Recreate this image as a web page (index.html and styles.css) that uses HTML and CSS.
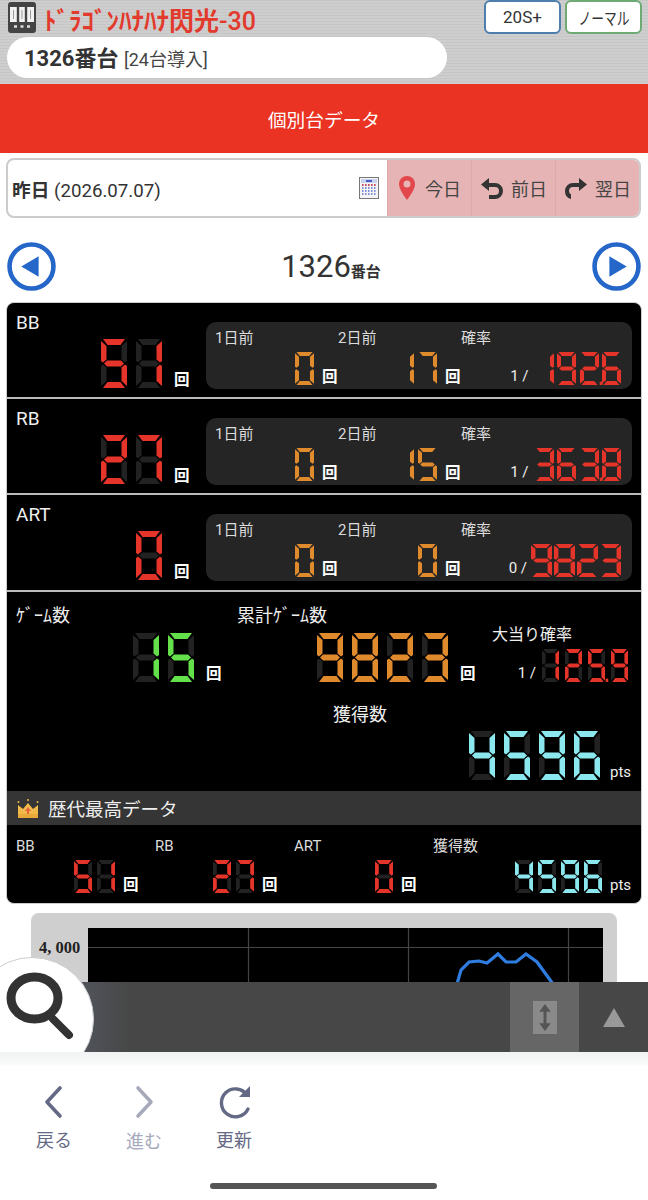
FILE: index.html
```html
<!DOCTYPE html>
<html lang="ja">
<head>
<meta charset="utf-8">
<title>1326番台</title>
<link rel="stylesheet" href="styles.css">
</head>
<body>
<div class="page">
  <header class="head">
    <div class="head-top">
      <svg class="slot-icon" viewBox="0 0 28 31"><rect x="1" y="1" width="26" height="29" rx="2" fill="#f2f2f2" stroke="#444" stroke-width="2"/><rect x="1" y="1" width="26" height="4" fill="#444"/><path d="M10 5v15M18 5v15" stroke="#444" stroke-width="2.400"/><path d="M5.500 8v9M14 8v9M22.500 8v9" stroke="#999" stroke-width="1"/><rect x="1" y="20" width="26" height="10" fill="#444"/><path d="M6 24.500h3M12.500 24.500h3M19 24.500h3" stroke="#ddd" stroke-width="2.500"/></svg>
      <h1 class="title">ﾄﾞﾗｺﾞﾝﾊﾅﾊﾅ閃光<span class="title-num">-30</span></h1>
      <div class="head-btns">
        <span class="hbtn hbtn-blue">20S+</span>
        <span class="hbtn hbtn-green"><span class="narrow">ノーマル</span></span>
      </div>
    </div>
    <div class="pill"><b>1326番台</b> <span class="pill-sub">[24台導入]</span></div>
  </header>
  <div class="redbar">個別台データ</div>
  <div class="datebar">
    <div class="date-left">
      <span class="date-text"><b>昨日</b> (2026.07.07)</span>
      <svg class="cal" viewBox="0 0 20 22"><rect x=".5" y=".5" width="19" height="21" fill="#f4f4f4" stroke="#777"/><rect x="2" y="2" width="16" height="4" fill="#c9d3ee"/><path d="M7 3h6v2H7z" fill="#4a57c8"/><path d="M3 8h14M3 11h14M3 14h14M3 17h14" stroke="#5a6bd0" stroke-width="1.400" stroke-dasharray="1.500 1.500"/><path d="M3 8h14" stroke="#d33" stroke-width="1.400" stroke-dasharray="1.500 1.500"/></svg>
    </div>
    <div class="date-btn">
      <svg class="dicon" viewBox="0 0 18 26"><path d="M9 1a8 8 0 0 0-8 8c0 6 8 16 8 16s8-10 8-16a8 8 0 0 0-8-8z" fill="#e2474c"/><circle cx="9" cy="9" r="3.500" fill="#e9b5b5"/></svg><span>今日</span>
    </div>
    <div class="date-btn">
      <svg class="dicon dicon-arrow" viewBox="0 0 24 24"><path d="M9 2 1 8.500 9 15v-4h6a4 4 0 0 1 4 4 4 4 0 0 1-4 4H9v4h6a8 8 0 0 0 8-8 8 8 0 0 0-8-8H9z" fill="#333"/></svg><span>前日</span>
    </div>
    <div class="date-btn">
      <svg class="dicon dicon-arrow" viewBox="0 0 24 24"><path d="M15 2l8 6.500L15 15v-4H9a4 4 0 0 0-4 4 4 4 0 0 0 2 3.500V23a8 8 0 0 1-6-8 8 8 0 0 1 8-8h6z" fill="#333"/></svg><span>翌日</span>
    </div>
  </div>
  <nav class="numnav">
    <svg class="navarrow" viewBox="0 0 48 48"><circle cx="24" cy="24" r="21.500" fill="#fff" stroke="#2566c9" stroke-width="4.500"/><path d="M14 24 31 14v20z" fill="#2566c9"/></svg>
    <div class="numtitle">1326<small>番台</small></div>
    <svg class="navarrow" viewBox="0 0 48 48"><circle cx="24" cy="24" r="21.500" fill="#fff" stroke="#2566c9" stroke-width="4.500"/><path d="M34 24 17 14v20z" fill="#2566c9"/></svg>
  </nav>
  <section class="panel">
    <div class="row">
      <div class="row-main">
        <div class="row-label">BB</div>
        <div class="val"><span class="led led-l">51</span><span class="unit">回</span></div>
      </div>
      <div class="sub">
        <div class="sub-label">1日前</div><div class="sub-label">2日前</div><div class="sub-label">確率</div>
        <div class="val"><span class="led led-m led-nooff">0</span><span class="unit">回</span></div>
        <div class="val"><span class="led led-m led-nooff">17</span><span class="unit">回</span></div>
        <div class="val rate"><span class="frac">1 /</span><span class="led led-r led-nooff">192.6</span></div>
      </div>
    </div>
    <div class="row">
      <div class="row-main">
        <div class="row-label">RB</div>
        <div class="val"><span class="led led-l">27</span><span class="unit">回</span></div>
      </div>
      <div class="sub">
        <div class="sub-label">1日前</div><div class="sub-label">2日前</div><div class="sub-label">確率</div>
        <div class="val"><span class="led led-m led-nooff">0</span><span class="unit">回</span></div>
        <div class="val"><span class="led led-m led-nooff">15</span><span class="unit">回</span></div>
        <div class="val rate"><span class="frac">1 /</span><span class="led led-r led-nooff">363.8</span></div>
      </div>
    </div>
    <div class="row row-last">
      <div class="row-main">
        <div class="row-label">ART</div>
        <div class="val"><span class="led led-l">0</span><span class="unit">回</span></div>
      </div>
      <div class="sub">
        <div class="sub-label">1日前</div><div class="sub-label">2日前</div><div class="sub-label">確率</div>
        <div class="val"><span class="led led-m led-nooff">0</span><span class="unit">回</span></div>
        <div class="val"><span class="led led-m led-nooff">0</span><span class="unit">回</span></div>
        <div class="val rate"><span class="frac frac-tight">0 /</span><span class="led led-w led-nooff">9823</span></div>
      </div>
    </div>
    <div class="games">
      <div class="game-col game-col-a">
        <div class="game-label">ｹﾞｰﾑ数</div>
        <div class="val"><span class="led led-l led-green">15</span><span class="unit unit-game">回</span></div>
      </div>
      <div class="game-col game-col-b">
        <div class="game-label">累計ｹﾞｰﾑ数</div>
        <div class="val"><span class="led led-l led-orange">9823</span><span class="unit unit-game">回</span></div>
      </div>
      <div class="game-col game-col-c">
        <div class="hit-label">大当り確率</div>
        <div class="val"><span class="frac frac-hit">1 /</span><span class="led led-h">125.9</span></div>
      </div>
    </div>
    <div class="points">
      <div class="game-label">獲得数</div>
      <div class="val"><span class="led led-l led-cyan">4596</span><span class="pts">pts</span></div>
    </div>
    <div class="band">
      <svg class="crown" viewBox="0 0 22 19"><rect x="1" y="15" width="20" height="4" fill="#e8a93a"/><path d="M1 15V6l5 4 5-6 5 6 5-4v9z" fill="#f2b94a"/><path d="M11 8l3 4h-2v3h-2v-3H8z" fill="#e5653c"/><circle cx="1.500" cy="3" r="1" fill="#f2b94a"/><circle cx="11" cy="1" r="1" fill="#f2b94a"/><circle cx="20.500" cy="3" r="1" fill="#f2b94a"/></svg>
      <span>歴代最高データ</span>
    </div>
    <div class="best">
      <div class="best-col"><div class="best-label">BB</div><div class="val"><span class="led led-s">51</span><span class="unit">回</span></div></div>
      <div class="best-col"><div class="best-label">RB</div><div class="val"><span class="led led-s">27</span><span class="unit">回</span></div></div>
      <div class="best-col"><div class="best-label">ART</div><div class="val"><span class="led led-s">0</span><span class="unit">回</span></div></div>
      <div class="best-col best-col-last"><div class="best-label">獲得数</div><div class="val"><span class="led led-s led-cyan">4596</span><span class="pts">pts</span></div></div>
    </div>
  </section>
  <div class="chart">
    <div class="chart-y">4, 000</div>
    <svg class="plot" viewBox="0 0 515 100"><rect width="515" height="100" fill="#000"/><path d="M0 19.500h515M160.500 0v100M320.500 0v100M480.500 0v100" stroke="#444" stroke-width="1.200"/><path d="M369 56 373 42 381 34 391 33 399 35 410 26 418 34 428 34 438 26 449 34 465 56" fill="none" stroke="#2f7de1" stroke-width="3.200"/></svg>
  </div>
</div>

<div class="floatbar">
  <div class="searchcircle">
    <svg class="searchicon" viewBox="0 0 70 70"><ellipse cx="28.500" cy="26" rx="23.500" ry="21" fill="none" stroke="#333" stroke-width="9"/><path d="M47 47 63 63" stroke="#333" stroke-width="8" stroke-linecap="round"/></svg>
  </div>
  <div class="floatbtn floatbtn-active"><span class="resize"><svg viewBox="0 0 24 34"><path d="M12 3 6 11h4.500v12H6l6 8 6-8h-4.500V11H18z" fill="#555"/></svg></span></div>
  <div class="floatbtn"><svg class="tri" viewBox="0 0 22 19"><path d="M11 0 22 19H0z" fill="#999"/></svg></div>
</div>

<div class="toolbar">
  <div class="tool">
    <svg class="tool-icon" viewBox="0 0 28 36"><path d="M20 4 7 18l13 14" fill="none" stroke="#646a85" stroke-width="3.600" stroke-linecap="round" stroke-linejoin="round"/></svg>
    <span>戻る</span>
  </div>
  <div class="tool tool-off">
    <svg class="tool-icon" viewBox="0 0 28 36"><path d="M8 4l13 14L8 32" fill="none" stroke="#a6a9ba" stroke-width="3.600" stroke-linecap="round" stroke-linejoin="round"/></svg>
    <span>進む</span>
  </div>
  <div class="tool">
    <svg class="tool-icon tool-reload" viewBox="0 0 36 36"><path d="M29 25a14 14 0 1 1-1-14" fill="none" stroke="#646a85" stroke-width="3.400" stroke-linecap="round"/><path d="M31 2v11H20z" fill="#646a85"/></svg>
    <span>更新</span>
  </div>
  <div class="homebar"></div>
</div>
<script src="led.js"></script>
</body>
</html>
```
FILE: styles.css
```css
* { box-sizing: border-box; }
html, body { margin: 0; padding: 0; }
body {
  width: 648px;
  height: 1200px;
  overflow: hidden;
  position: relative;
  background: #fff;
  color: #333;
  font-family: Roboto, "Noto Sans CJK JP", sans-serif;
}
.page { display: flex; flex-direction: column; }

/* header */
.head {
  height: 84px;
  padding: 0 6px 0 7px;
  background: repeating-linear-gradient(180deg, #c6c6c6 0, #c6c6c6 1px, #cecece 1px, #cecece 3px);
}
.head-top { display: flex; align-items: flex-start; height: 37px; }
.slot-icon { width: 28px; height: 31px; margin: 2px 8px 0 1px; flex: none; }
.title {
  margin: 0;
  font-size: 25px;
  line-height: 38px;
  font-weight: 700;
  color: #e23a2c;
  white-space: nowrap;
  font-family: "Noto Sans CJK JP", sans-serif;
}
.title-num { font-family: Roboto, sans-serif; font-weight: 500; font-size: 25px; }
.head-btns { margin-left: auto; display: flex; gap: 4px; }
.hbtn {
  width: 77px;
  height: 34px;
  background: #fff;
  border-radius: 6px;
  border: 2px solid;
  font-size: 17px;
  color: #333;
  display: flex;
  align-items: center;
  justify-content: center;
  white-space: nowrap;
}
.hbtn-blue { border-color: #4d7fae; }
.hbtn-green { border-color: #6eaa74; }
.narrow { display: inline-block; transform: scaleX(.75); }
.pill {
  width: 440px;
  height: 41px;
  background: #fff;
  border-radius: 21px;
  padding: 0 17px;
  line-height: 44px;
  font-size: 22px;
  white-space: nowrap;
}
.pill-sub { font-size: 18px; color: #444; }

.redbar {
  height: 69px;
  background: #ea3323;
  color: #fff;
  font-size: 18.700px;
  display: flex;
  align-items: center;
  justify-content: center;
}

/* date bar */
.datebar {
  margin: 5px 7px 0 6px;
  height: 60px;
  display: flex;
  border: 2px solid #ccc;
  border-radius: 8px;
  overflow: hidden;
  background: #fff;
}
.date-left {
  width: 379px;
  display: flex;
  align-items: center;
  justify-content: space-between;
  padding: 0 8px 0 4px;
  font-size: 18.700px;
  color: #333;
}
.cal { width: 20px; height: 22px; }
.date-btn {
  flex: 1;
  background: #e6b4b4;
  border-left: 1px solid #dcaaaa;
  display: flex;
  align-items: center;
  justify-content: center;
  gap: 9px;
  font-size: 18px;
  color: #444;
}
.dicon { width: 18px; height: 26px; }
.dicon-arrow { width: 24px; height: 24px; margin-right: -2px; }

/* number nav */
.numnav {
  height: 84px;
  padding: 12px 7px 0;
  display: flex;
  align-items: center;
  justify-content: space-between;
}
.navarrow { width: 49px; height: 49px; }
.numtitle { font-size: 31px; color: #333; margin-left: 14px; }
.numtitle small { font-size: 15px; font-weight: 700; }

/* data panel */
.panel {
  margin: 0 6px;
  height: 602px;
  background: #000;
  border: 1px solid #ccc;
  border-radius: 8px;
  overflow: hidden;
  color: #eee;
}
.row {
  height: 96px;
  display: flex;
  border-bottom: 2px solid #bbb;
}
.row-last { height: 97px; }
.row-main { width: 199px; padding: 10px 18px 0 9px; display: flex; flex-direction: column; }
.row-label { font-size: 19px; line-height: 20px; }
.row-main .val { margin-top: 6px; }
.val { display: flex; align-items: flex-end; justify-content: flex-end; }
.sub {
  width: 426px;
  height: 67px;
  margin-top: 19px;
  background: #252525;
  border-radius: 10px;
  padding: 6px 11px 0 9px;
  display: grid;
  grid-template-columns: 123px 123px 1fr;
  grid-template-rows: 20px 33px;
  row-gap: 4px;
}
.sub-label { font-size: 15px; line-height: 20px; color: #ddd; }
.sub .val { padding-right: 2px; }
.sub .rate { padding-right: 0; }
.unit {
  font-size: 15.500px;
  line-height: 15px;
  width: 14px;
  margin-left: 8px;
  font-weight: 700;
  color: #fff;
  flex: none;
  white-space: nowrap;
}
.row-main .unit { margin-left: 12px; }
.frac { font-size: 15px; line-height: 18px; margin-right: 6px; color: #eee; }
.frac-tight { margin-right: 4px; }
.frac-hit { margin-right: 6px; }

/* game section */
.games { display: flex; height: 91px; }
.game-col { padding-top: 14px; }
.game-col-a { width: 213px; padding-left: 9px; }
.game-col-b { width: 254px; padding-left: 17px; }
.game-col-c { flex: 1; padding-left: 18px; padding-right: 13px; padding-top: 0; }
.game-label { font-size: 18px; line-height: 20px; color: #eee; white-space: nowrap; }
.game-col .val { margin-top: 7px; }
.unit-game { margin-left: 12px; }
.hit-label { font-size: 16px; line-height: 20px; margin-top: 33px; white-space: nowrap; }
.game-col-c .val { margin-top: 4px; }
.points { height: 108px; margin-left: 326px; padding: 22px 9px 0 0; }
.points .val { margin-top: 6px; }
.pts { font-size: 15px; line-height: 16px; margin-left: 10px; color: #eee; width: 22px; }
.band {
  height: 34px;
  background: #353535;
  display: flex;
  align-items: center;
  gap: 9px;
  padding-left: 10px;
  font-size: 18.500px;
  color: #eee;
}
.crown { width: 22px; height: 19px; }
.best { display: flex; padding: 11px 9px 0 9px; }
.best-col { width: 139px; padding-right: 18px; }
.best-col-last { flex: 1; padding-right: 0; }
.best-label { font-size: 15px; line-height: 20px; color: #ddd; }
.best-col .val { margin-top: 4px; }
.best-col .unit { margin-left: 8px; }
.best-col .pts { margin-left: 8px; }

/* seven-segment numerals */
.led { display: inline-flex; flex: none; --on: #e5352a; --off: #222; }
.led-m { --cw: 19px; --ch: 33px; --gap: 4px; --on: #e08a2e; }
.led-l { --cw: 26px; --ch: 49px; --gap: 9px; }
.led-r { --cw: 19px; --ch: 33px; --gap: 3.500px; }
.led-w { --cw: 21px; --ch: 33px; --gap: 2px; }
.led-h { --cw: 17px; --ch: 33px; --gap: 6px; }
.led-s { --cw: 18px; --ch: 33px; --gap: 5px; }
.led-nooff { --off: transparent; }
.led-green { --on: #63e04a; }
.led-orange { --on: #e08a2e; }
.led-cyan { --on: #8be8ef; }
.cell {
  position: relative;
  width: var(--cw);
  height: var(--ch);
  margin-left: var(--gap);
  font-size: 10px;
  color: transparent;
  overflow: visible;
}
.cell:first-child { margin-left: 0; }
.cell svg { position: absolute; inset: 0; width: 100%; height: 100%; overflow: visible; }
.seg-on { fill: var(--on); }
.seg-off { fill: var(--off); }

/* chart */
.chart {
  position: relative;
  margin: 9px 31px 0 31px;
  height: 120px;
  background: #cfcfcf;
  border-radius: 8px;
  padding: 15px 14px 0 57px;
}
.plot { display: block; width: 515px; height: 100px; }
.chart-y {
  position: absolute;
  left: 8px;
  top: 27px;
  font-family: "Liberation Serif", serif;
  font-weight: 700;
  font-size: 16.500px;
  line-height: 16px;
  color: #222;
  white-space: nowrap;
}

/* floating bar over page */
.floatbar {
  position: absolute;
  left: 0;
  top: 982px;
  width: 648px;
  height: 70px;
  background: linear-gradient(90deg, #4f5258 90px, #474747 130px);
  display: flex;
  justify-content: flex-end;
}
.searchcircle {
  position: absolute;
  left: -30px;
  top: -25px;
  width: 124px;
  height: 124px;
  border-radius: 50%;
  background: #fff;
  border: 1px solid #ccc;
}
.searchicon { position: absolute; left: 35px; top: 14px; width: 70px; height: 70px; }
.floatbtn { width: 69px; display: flex; align-items: center; justify-content: center; }
.floatbtn-active { background: #666; }
.resize { width: 24px; height: 33px; background: #8a8a8a; display: block; }
.resize svg { display: block; width: 24px; height: 33px; }
.tri { width: 22px; height: 19px; }

/* browser toolbar */
.toolbar {
  position: absolute;
  left: 0;
  top: 1052px;
  width: 648px;
  height: 148px;
  background: linear-gradient(180deg, #f1f3f3 0, #f8f9f9 12px, #fff 14px);
  display: flex;
  padding: 32px 0 0 9px;
}
.tool {
  width: 90px;
  display: flex;
  flex-direction: column;
  align-items: center;
  font-size: 18px;
  color: #646a85;
}
.tool span { margin-top: 9px; line-height: 24px; }
.tool-off { color: #a6a9ba; }
.tool-off span { margin-top: 10px; }
.tool-icon { width: 36px; height: 36px; }
.tool-reload { margin-left: 5px; }
.homebar {
  position: absolute;
  left: 210px;
  top: 131px;
  width: 227px;
  height: 6px;
  border-radius: 3px;
  background: #555;
}
```
FILE: led.js
```js
(function () {
  var NS = 'http://www.w3.org/2000/svg';
  var SEGS = {
    a: '2,0 24,0 19.5,6 6.5,6',
    b: '26,2 26,22 24,23.5 20.5,20.5 20.5,7',
    c: '26,27 26,47 20.5,42 20.5,28.5 24,25.5',
    d: '6.5,43 19.5,43 24,49 2,49',
    e: '0,27 2,25.5 5.5,28.5 5.5,42 0,47',
    f: '0,2 5.5,7 5.5,20.5 2,23.5 0,22',
    g: '6,21.5 20,21.5 23,24.5 20,27.5 6,27.5 3,24.5'
  };
  var MAP = {
    '0': 'abcdef', '1': 'bc', '2': 'abdeg', '3': 'abcdg', '4': 'bcfg',
    '5': 'acdfg', '6': 'acdefg', '7': 'abc', '8': 'abcdefg', '9': 'abcdfg'
  };
  document.querySelectorAll('.led').forEach(function (led) {
    var text = led.textContent.trim();
    led.textContent = '';
    for (var i = 0; i < text.length; i++) {
      var ch = text[i];
      var dot = text[i + 1] === '.';
      var cell = document.createElement('span');
      cell.className = 'cell';
      cell.textContent = dot ? ch + '.' : ch;
      var svg = document.createElementNS(NS, 'svg');
      svg.setAttribute('viewBox', '0 0 26 49');
      svg.setAttribute('preserveAspectRatio', 'none');
      svg.setAttribute('aria-hidden', 'true');
      Object.keys(SEGS).forEach(function (k) {
        var p = document.createElementNS(NS, 'polygon');
        p.setAttribute('points', SEGS[k]);
        p.setAttribute('class', MAP[ch].indexOf(k) >= 0 ? 'seg-on' : 'seg-off');
        svg.appendChild(p);
      });
      if (dot) {
        var r = document.createElementNS(NS, 'rect');
        r.setAttribute('x', '27');
        r.setAttribute('y', '44');
        r.setAttribute('width', '4');
        r.setAttribute('height', '5');
        r.setAttribute('class', 'seg-on');
        svg.appendChild(r);
        i++;
      }
      cell.appendChild(svg);
      led.appendChild(cell);
    }
  });
})();
```
